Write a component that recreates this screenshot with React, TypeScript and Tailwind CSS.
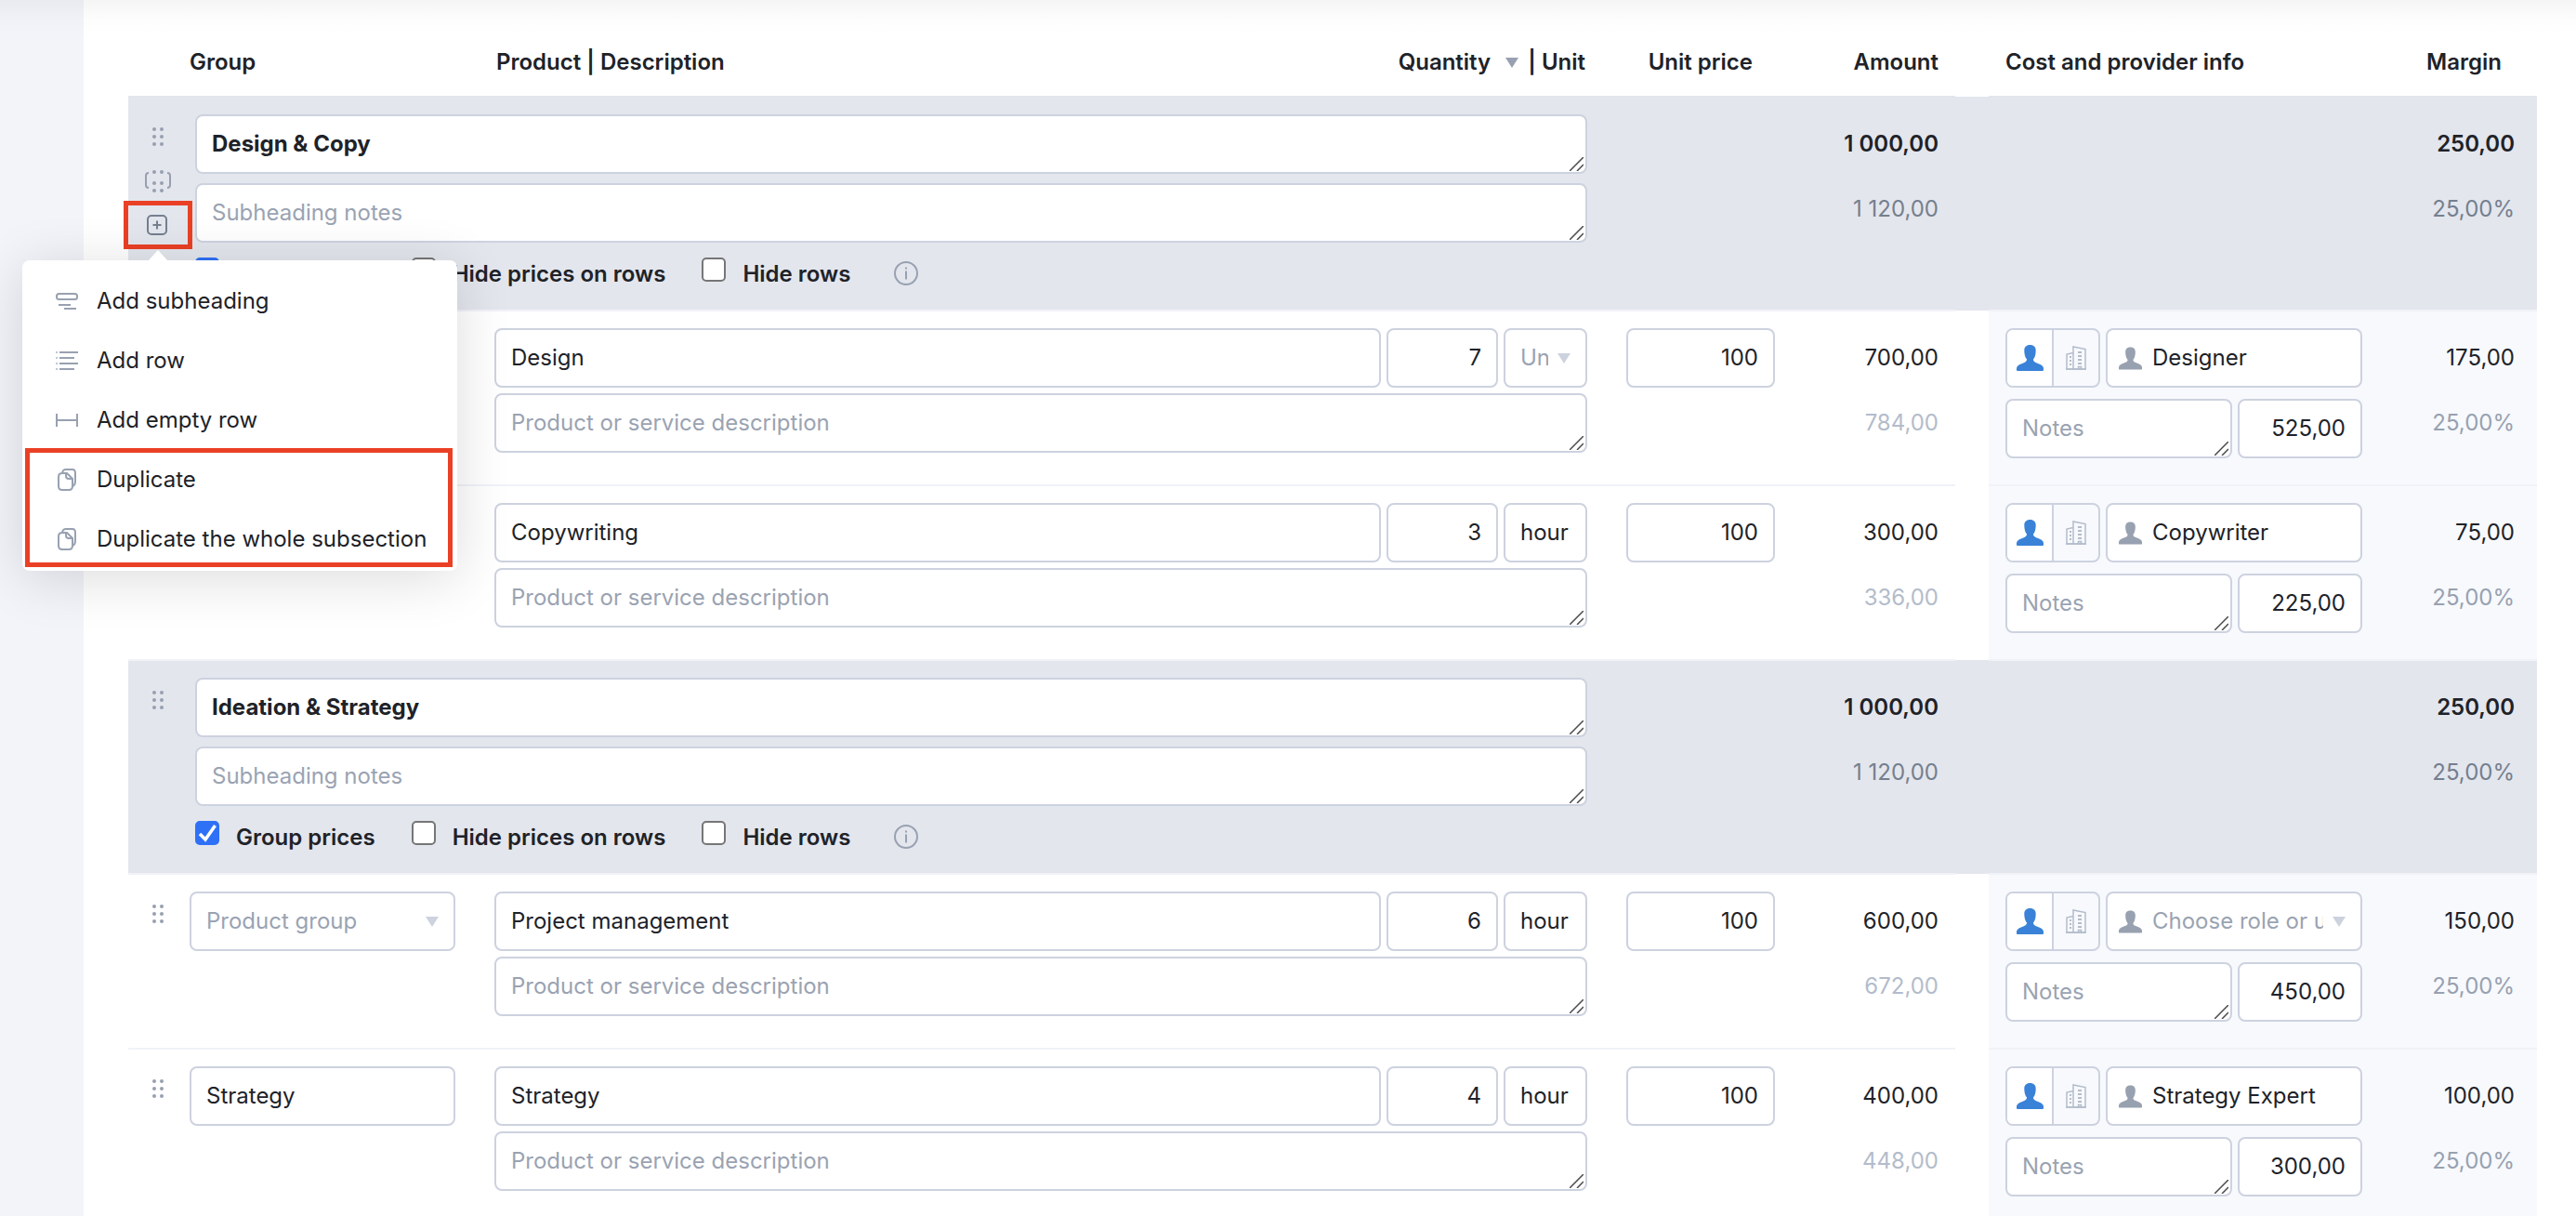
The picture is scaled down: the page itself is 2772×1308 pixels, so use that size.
import { useState } from "react";
import type { ComponentProps, ReactNode } from "react";
import clsx from "clsx";

type Item = {
  group?: string;
  product: string;
  quantity: string;
  unit?: string;
  price: string;
  amount: string;
  gross: string;
  role?: string;
  cost: string;
  margin: string;
};

type Section = { title: string; open?: boolean; items: Item[] };

const SECTIONS: Section[] = [
  {
    title: "Design & Copy",
    open: true,
    items: [
      { product: "Design", quantity: "7", price: "100", amount: "700,00", gross: "784,00", role: "Designer", cost: "525,00", margin: "175,00" },
      { product: "Copywriting", quantity: "3", unit: "hour", price: "100", amount: "300,00", gross: "336,00", role: "Copywriter", cost: "225,00", margin: "75,00" },
    ],
  },
  {
    title: "Ideation & Strategy",
    items: [
      { product: "Project management", quantity: "6", unit: "hour", price: "100", amount: "600,00", gross: "672,00", cost: "450,00", margin: "150,00" },
      { group: "Strategy", product: "Strategy", quantity: "4", unit: "hour", price: "100", amount: "400,00", gross: "448,00", role: "Strategy Expert", cost: "300,00", margin: "100,00" },
    ],
  },
];

const FIELD = "block h-16 w-full min-w-0 rounded-lg border-2 border-[#cdd2df] bg-white px-4 placeholder:text-[#9aa3b2] placeholder:opacity-100 outline-none";

/* Icons */

function Triangle({ className }: { className?: string }) {
  return (
    <svg viewBox="0 0 14 11" className={clsx("h-[11px] w-3.5 fill-current", className)} aria-hidden="true">
      <path d="M0 0h14L7 11z" />
    </svg>
  );
}

function DragDots() {
  return (
    <svg viewBox="0 0 14 20" className="h-5 w-3.5 fill-[#98a0af]" aria-hidden="true">
      {[2, 10, 18].map((y) => (
        <g key={y}>
          <circle cx="3" cy={y} r="2" />
          <circle cx="11" cy={y} r="2" />
        </g>
      ))}
    </svg>
  );
}

function DragGroup() {
  return (
    <svg viewBox="0 0 28 24" className="h-6 w-7 fill-[#98a0af]" aria-hidden="true">
      {[2, 14, 22].map((y) => (
        <g key={y}>
          <circle cx="10" cy={y} r="2" />
          <circle cx="18" cy={y} r="2" />
        </g>
      ))}
      <path d="M4 3Q1 3 1 6v10q0 3 3 3M24 3q3 0 3 3v10q0 3-3 3" fill="none" stroke="#98a0af" strokeWidth="2" />
    </svg>
  );
}

function PlusBox() {
  return (
    <svg viewBox="0 0 22 22" className="size-[22px]" fill="none" stroke="#757f8f" strokeWidth="2" aria-hidden="true">
      <rect x="1" y="1" width="20" height="20" rx="4" />
      <path d="M11 6.500v9M6.500 11h9" />
    </svg>
  );
}

function Person({ className }: { className?: string }) {
  return (
    <svg viewBox="0 0 29 28" className={clsx("fill-current", className)} aria-hidden="true">
      <path d="M14.500 0C18.500 0 20.800 2.300 20.700 6.200C20.700 10 19.700 13.800 17.900 15.600C17.900 17.200 19 18.300 20.600 19L26 21.300Q29 22.700 29 25v2Q29 28 28 28H1Q0 28 0 27v-2Q0 22.700 3 21.300L8.400 19C10 18.300 11.100 17.200 11.100 15.600C9.300 13.800 8.300 10 8.300 6.200C8.200 2.300 10.500 0 14.500 0z" />
    </svg>
  );
}

function Building() {
  return (
    <svg viewBox="0 0 22 26" className="h-[26px] w-[22px]" fill="none" stroke="#b3bccb" strokeWidth="1.500" aria-hidden="true">
      <path d="M8 25V1l13 2.500V25zM8 7.500L1 9v16h7" />
      <path d="M13 7h4M13 11h4M13 15h4M13 19h4" strokeWidth="2" />
      <path d="M4 12h2M4 16h2M4 20h2" strokeWidth="2" />
      <path d="M13.500 22.500h3V25h-3z" />
      <path d="M0 25h22" />
    </svg>
  );
}

function InfoIcon() {
  return (
    <svg viewBox="0 0 26 26" className="size-[26px]" fill="none" stroke="#98a1b1" strokeWidth="2" aria-hidden="true">
      <circle cx="13" cy="13" r="12" />
      <path d="M13 10.500v9M13 6.500v2" />
    </svg>
  );
}

function MenuIcon({ name }: { name: string }) {
  return (
    <svg viewBox="0 0 24 24" className="size-6 shrink-0" fill="none" stroke="#98a1b1" strokeWidth="2" aria-hidden="true">
      {name === "subheading" && (
        <>
          <rect x="1" y="4" width="22" height="6" rx="2.500" />
          <path d="M3 16h13M9 20h13" />
        </>
      )}
      {name === "row" && (
        <>
          <path d="M4 3h20M4 9h16M4 15h20M4 21h16" />
          <path d="M0 3h2M0 9h2M0 15h2M0 21h2" opacity="0.600" />
        </>
      )}
      {name === "empty" && <path d="M1 5v14M23 5v14M1 12h22" />}
      {name === "copy" && (
        <>
          <path d="M3 9q0-4 4-4h5l6 6v8q0 4-4 4H7q-4 0-4-4z" />
          <path d="M7 5q.5-4 4-4h7q3 0 3 4v9q0 4-3 5M11 5v3q0 3 3 3h4" />
        </>
      )}
    </svg>
  );
}

/* Fields */

function TextInput({ className, ...props }: ComponentProps<"input">) {
  return <input type="text" className={clsx(FIELD, "pb-0.5", className)} {...props} />;
}

function TextArea({ wrapper, className, ...props }: ComponentProps<"textarea"> & { wrapper?: string }) {
  return (
    <div className={clsx("relative", wrapper)}>
      <textarea rows={1} className={clsx(FIELD, "resize-none overflow-hidden py-3.5 leading-8", className)} {...props} />
      <svg viewBox="0 0 15 15" className="pointer-events-none absolute right-1 bottom-[3px] size-[15px]" stroke="#4a4a4a" strokeWidth="1.500" aria-hidden="true">
        <path d="M0 15L15 0M8 15l7-7" />
      </svg>
    </div>
  );
}

function Picker({ value, placeholder, label, className, wrapper, icon }: {
  value?: string;
  placeholder: string;
  label: string;
  className?: string;
  wrapper?: string;
  icon?: ReactNode;
}) {
  return (
    <div className={clsx("relative", wrapper)}>
      {icon}
      {value ? (
        <TextInput aria-label={label} defaultValue={value} className={className} />
      ) : (
        <>
          <select aria-label={label} className={clsx(FIELD, "appearance-none overflow-hidden text-clip pr-10 text-[#9aa3b2]", className)}>
            <option>{placeholder}</option>
          </select>
          <Triangle className="pointer-events-none absolute top-[27px] right-[18px] text-[#cdd2df]" />
        </>
      )}
    </div>
  );
}

function Check({ label, defaultChecked }: { label: string; defaultChecked?: boolean }) {
  return (
    <label className="flex items-start gap-[18px] font-semibold">
      <span className="relative block size-[26px]">
        <input
          type="checkbox"
          defaultChecked={defaultChecked}
          className="peer block size-[26px] appearance-none rounded-[5px] border-2 border-[#767676] bg-white checked:border-[#2f71f6] checked:bg-[#2f71f6]"
        />
        <svg viewBox="0 0 26 26" className="pointer-events-none absolute inset-0 hidden peer-checked:block" fill="none" stroke="white" strokeWidth="3.500" aria-hidden="true">
          <path d="M5 14l6 6L21.500 5" />
        </svg>
      </span>
      <span className="leading-9">{label}</span>
    </label>
  );
}

/* Row menu */

function MenuItem({ icon, children }: { icon: string; children: ReactNode }) {
  return (
    <button type="button" role="menuitem" className="flex h-16 w-full items-center gap-5 pr-8 pl-9 text-left whitespace-nowrap">
      <MenuIcon name={icon} />
      {children}
    </button>
  );
}

function RowMenu() {
  return (
    <div role="menu" className="absolute top-full -left-[114px] z-20 mt-[15px] w-[468px] rounded-lg bg-white pt-3 pb-0.5 shadow-[0_8px_60px_rgba(0,0,0,0.14)]">
      <svg viewBox="0 0 22 12" className="absolute -top-[11px] left-[135px] h-3 w-[22px] fill-white" aria-hidden="true">
        <path d="M0 12L11 0l11 12z" />
      </svg>
      <MenuItem icon="subheading">Add subheading</MenuItem>
      <MenuItem icon="row">Add row</MenuItem>
      <MenuItem icon="empty">Add empty row</MenuItem>
      <div className="relative">
        <MenuItem icon="copy">Duplicate</MenuItem>
        <MenuItem icon="copy">Duplicate the whole subsection</MenuItem>
        <div className="pointer-events-none absolute -top-0.5 right-[5px] bottom-0.5 left-[3px] border-5 border-[#ea4025]" />
      </div>
    </div>
  );
}

function Handle({ children, label }: { children: ReactNode; label: string }) {
  return (
    <button type="button" aria-label={label} className="flex h-12 w-16 items-center justify-center">
      {children}
    </button>
  );
}

function SectionRow({ section, first }: { section: Section; first: boolean }) {
  const [open, setOpen] = useState(!!section.open);
  const cell = clsx("border-t-2 pt-[18px]", first ? "border-[#e3e6ed]" : "border-[#f0f2f7]");

  return (
    <tr className="h-[230px] bg-[#e3e6ed] align-top">
      <td className={cell}>
        <Handle label="Move subheading"><DragDots /></Handle>
        {open && (
          <>
            <Handle label="Move subsection"><DragGroup /></Handle>
            <div className="relative w-16">
              <button type="button" aria-label="Add" onClick={() => setOpen(false)} className="flex h-[46px] w-[62px] items-center justify-center">
                <PlusBox />
              </button>
              <div className="pointer-events-none absolute -inset-x-[5px] -inset-y-[3px] border-5 border-[#ea4025]" />
              <RowMenu />
            </div>
          </>
        )}
      </td>
      <td colSpan={2} className={clsx(cell, "pl-1.5")}>
        <TextArea aria-label="Subheading" defaultValue={section.title} className="font-bold" />
        <TextArea aria-label="Subheading notes" placeholder="Subheading notes" wrapper="mt-2.5" />
        <div className="flex items-start gap-[39px] pt-4">
          <Check label="Group prices" defaultChecked />
          <Check label="Hide prices on rows" />
          <Check label="Hide rows" />
          <button type="button" aria-label="More information" className="mt-1 ml-2">
            <InfoIcon />
          </button>
        </div>
      </td>
      <td className={cell} />
      <td className={clsx(cell, "pr-[18px] text-right")}>
        <div className="leading-[64px] font-semibold">1 000,00</div>
        <div className="mt-1.5 leading-[64px] text-[#757f8f]">1 120,00</div>
      </td>
      <td />
      <td className={cell} />
      <td className={clsx(cell, "pr-6 text-right")}>
        <div className="leading-[64px] font-semibold">250,00</div>
        <div className="mt-1.5 leading-[64px] text-[#757f8f]">25,00%</div>
      </td>
    </tr>
  );
}

function ItemRow({ item }: { item: Item }) {
  const cell = "border-t-2 border-[#f0f2f7] pt-[18px]";

  return (
    <tr className="h-[188px] align-top">
      <td className={cell}>
        <Handle label="Move row"><DragDots /></Handle>
      </td>
      <td className={clsx(cell, "pr-[42px]")}>
        <Picker label="Product group" value={item.group} placeholder="Product group" />
      </td>
      <td className={cell}>
        <div className="flex gap-1.5">
          <TextInput aria-label="Product" defaultValue={item.product} className="flex-1" />
          <div className="w-[120px]">
            <TextInput aria-label="Quantity" defaultValue={item.quantity} className="text-right" />
          </div>
          <Picker label="Unit" value={item.unit} placeholder="Unit" wrapper="w-[90px]" />
        </div>
        <TextArea aria-label="Description" placeholder="Product or service description" wrapper="mt-1.5" />
      </td>
      <td className={clsx(cell, "pl-[42px]")}>
        <TextInput aria-label="Unit price" defaultValue={item.price} className="text-right" />
      </td>
      <td className={clsx(cell, "pr-[18px] text-right")}>
        <div className="leading-[64px]">{item.amount}</div>
        <div className="mt-1.5 leading-[64px] text-[#b3bccb]">{item.gross}</div>
      </td>
      <td />
      <td className={clsx(cell, "bg-[#f7f9fd] pl-[18px]")}>
        <div className="flex gap-1.5">
          <div className="flex h-16 w-[102px] shrink-0 overflow-hidden rounded-lg border-2 border-[#cdd2df]">
            <button type="button" aria-label="Person" className="flex w-12 items-center justify-center bg-white text-[#3a82d8]">
              <Person className="h-7 w-[29px]" />
            </button>
            <button type="button" aria-label="Company" className="flex flex-1 items-center justify-center border-l-2 border-[#cdd2df]">
              <Building />
            </button>
          </div>
          <Picker
            label="Role or user"
            value={item.role}
            placeholder="Choose role or user"
            wrapper="min-w-0 flex-1"
            className="pl-12"
            icon={<Person className="pointer-events-none absolute top-5 left-3.5 h-[25px] w-[25px] text-[#98a1b0]" />}
          />
        </div>
        <div className="mt-3 flex gap-1.5">
          <TextArea aria-label="Notes" placeholder="Notes" wrapper="flex-1" />
          <div className="w-[134px]">
            <TextInput aria-label="Cost" defaultValue={item.cost} className="text-right" />
          </div>
        </div>
      </td>
      <td className={clsx(cell, "bg-[#f7f9fd] pr-6 text-right")}>
        <div className="leading-[64px]">{item.margin}</div>
        <div className="mt-1.5 leading-[64px] text-[#98a1b0]">25,00%</div>
      </td>
    </tr>
  );
}

export default function App() {
  const th = "pt-[51px] pb-4 font-semibold";

  return (
    <div className="relative flex h-screen overflow-hidden bg-white font-[Inter,sans-serif] text-[24px] leading-8 text-[#202228]">
      <aside className="w-[90px] shrink-0 bg-[#f2f4f9]" />
      <main className="min-w-0 flex-1 pr-[42px] pl-12">
        <table className="w-full table-fixed border-collapse text-left">
          <colgroup>
            <col className="w-[66px]" />
            <col className="w-[328px]" />
            <col />
            <col className="w-[202px]" />
            <col className="w-[194px]" />
            <col className="w-9" />
            <col className="w-[402px]" />
            <col className="w-[188px]" />
          </colgroup>
          <thead>
            <tr className="h-[104px] align-top">
              <td />
              <th className={th}>Group</th>
              <th className={clsx(th, "px-0.5")}>
                <div className="flex justify-between">
                  <span>Product | Description</span>
                  <span className="flex items-center">
                    Quantity
                    <Triangle className="mr-2.5 ml-4 text-[#98a1b1]" />
                    | Unit
                  </span>
                </div>
              </th>
              <th className={clsx(th, "pr-6 text-right")}>Unit price</th>
              <th className={clsx(th, "pr-[18px] text-right")}>Amount</th>
              <td />
              <th className={clsx(th, "pl-[18px]")}>Cost and provider info</th>
              <th className={clsx(th, "pr-[38px] text-right")}>Margin</th>
            </tr>
          </thead>
          <tbody>
            {SECTIONS.map((section, i) => [
              <SectionRow key={section.title} section={section} first={i === 0} />,
              ...section.items.map((item) => <ItemRow key={item.product} item={item} />),
            ])}
          </tbody>
        </table>
      </main>
      <div className="pointer-events-none absolute inset-x-0 top-0 h-10 bg-linear-to-b from-black/4 via-black/1 to-transparent" />
    </div>
  );
}
